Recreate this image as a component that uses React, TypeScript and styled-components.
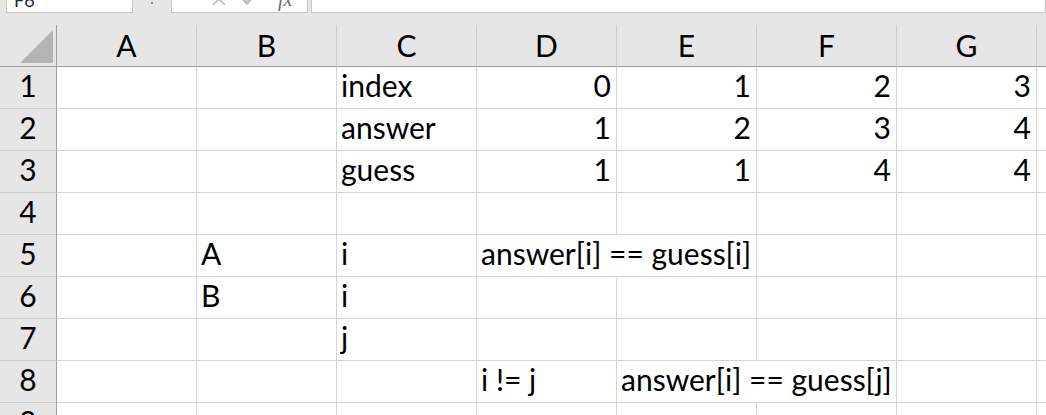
import React from 'react'
import styled, { createGlobalStyle, css } from 'styled-components'

const GlobalStyle = createGlobalStyle`
  html, body {
    margin: 0;
    padding: 0;
    width: 1046px;
    height: 415px;
    overflow: hidden;
    background: #e6e6e6;
  }
`

const Page = styled.div`
  width: 1046px;
  height: 415px;
  overflow: hidden;
  background: #e6e6e6;
  font-family: Lato, 'Open Sans', sans-serif;
`

/* ---------- formula bar (cut off at the top) ---------- */

const Toolbar = styled.div`
  height: 13px;
  display: flex;
  align-items: flex-end;
  overflow: hidden;
  padding-left: 6px;
  margin-bottom: 12px;
`

const boxStyle = css`
  flex: none;
  height: 30px;
  box-sizing: border-box;
  background: #fff;
  border: 1px solid #c6c6c6;
`

const NameBox = styled.div`
  ${boxStyle};
  width: 127px;
  display: flex;
  align-items: flex-end;
  padding: 0 0 3px 7px;
  font-size: 18px;
  line-height: 18px;
  color: #1f2a44;
`

const Grip = styled.div`
  flex: none;
  width: 38px;
  height: 13px;
  display: flex;
  justify-content: center;
  align-items: flex-start;
  padding-top: 2px;
  box-sizing: border-box;

  span {
    width: 2px;
    height: 2px;
    background: #8a8a8a;
  }
`

const IconBox = styled.div`
  ${boxStyle};
  width: 137px;
  display: flex;
  align-items: flex-end;
  padding-bottom: 6px;
`

const IconSlot = styled.div<{ $w: number }>`
  width: ${p => p.$w}px;
  display: flex;
  justify-content: center;
  color: #bdbdbd;
`

const Fx = styled.span`
  font-family: 'Liberation Serif', serif;
  font-style: italic;
  font-size: 20px;
  line-height: 14px;
  color: #6d6d6d;
`

const FormulaInput = styled.div`
  ${boxStyle};
  flex: 1;
  margin-left: 3px;
`

/* ---------- grid ---------- */

const Sheet = styled.div`
  display: grid;
  grid-template-columns: 57px repeat(8, 140px);
  grid-auto-rows: 42px;
`

const cellText = css`
  box-sizing: border-box;
  display: flex;
  align-items: flex-end;
  font-size: 30px;
  line-height: 30px;
  color: #000;
  white-space: nowrap;
`

const Corner = styled.div`
  position: relative;
  box-sizing: border-box;
  border-right: 1px solid #9e9e9e;
  border-bottom: 1px solid #9e9e9e;

  &::after {
    content: '';
    position: absolute;
    right: 3px;
    bottom: 3px;
    width: 0;
    height: 0;
    border-left: 33px solid transparent;
    border-bottom: 33px solid #b4b4b4;
  }
`

const ColHead = styled.div`
  ${cellText};
  justify-content: center;
  padding-bottom: 6px;
  border-right: 1px solid #cdcdcd;
  border-bottom: 1px solid #9e9e9e;
`

const RowHead = styled.div`
  ${cellText};
  justify-content: center;
  padding-bottom: 8px;
  border-right: 1px solid #9e9e9e;
  border-bottom: 1px solid #cdcdcd;
`

const Cell = styled.div<{ $num?: boolean; $spill?: boolean }>`
  ${cellText};
  background: transparent;
  justify-content: ${p => (p.$num ? 'flex-end' : 'flex-start')};
  padding: 0 5px 8px 4px;
  border-right: 1px solid ${p => (p.$spill ? 'transparent' : '#d4d4d4')};
  border-bottom: 1px solid #d4d4d4;
  overflow: visible;
`

const Body = styled.div`
  background: #fff;
  display: contents;
`

const columns = ['A', 'B', 'C', 'D', 'E', 'F', 'G', 'H']

type Value = string | number | undefined

const rows: Value[][] = [
  [, , 'index', 0, 1, 2, 3],
  [, , 'answer', 1, 2, 3, 4],
  [, , 'guess', 1, 1, 4, 4],
  [],
  [, 'A', 'i', 'answer[i] == guess[i]'],
  [, 'B', 'i'],
  [, , 'j'],
  [, , , 'i != j', 'answer[i] == guess[j]'],
  [],
]

// cells whose text runs over into the next column
const spills: Record<string, boolean> = { '5-3': true, '8-4': true }

const CellsBg = styled.div`
  grid-column: 2 / -1;
  grid-row: 2 / 11;
  background: #fff;
`

const XIcon = () => (
  <svg width="14" height="14" viewBox="0 0 14 14">
    <path d="M1 1 L13 13 M13 1 L1 13" stroke="currentColor" strokeWidth="1.6" fill="none" />
  </svg>
)

const CheckIcon = () => (
  <svg width="14" height="14" viewBox="0 0 14 14">
    <path d="M1 7 L5 11 L13 2" stroke="currentColor" strokeWidth="3" fill="none" />
  </svg>
)

export default function App() {
  return (
    <Page>
      <GlobalStyle />
      <Toolbar>
        <NameBox>F6</NameBox>
        <Grip>
          <span />
        </Grip>
        <IconBox>
          <IconSlot $w={30} />
          <IconSlot $w={34}>
            <XIcon />
          </IconSlot>
          <IconSlot $w={28}>
            <CheckIcon />
          </IconSlot>
          <IconSlot $w={44}>
            <Fx>fx</Fx>
          </IconSlot>
        </IconBox>
        <FormulaInput />
      </Toolbar>

      <Sheet>
        <CellsBg />
        <Corner style={{ gridRow: 1, gridColumn: 1 }} />
        {columns.map((c, i) => (
          <ColHead key={c} style={{ gridRow: 1, gridColumn: i + 2 }}>
            {c}
          </ColHead>
        ))}
        <Body>
          {rows.map((row, r) => (
            <React.Fragment key={r}>
              <RowHead style={{ gridRow: r + 2, gridColumn: 1 }}>{r + 1}</RowHead>
              {columns.map((c, ci) => {
                const v = row[ci]
                return (
                  <Cell
                    key={c}
                    style={{ gridRow: r + 2, gridColumn: ci + 2 }}
                    $num={typeof v === 'number'}
                    $spill={spills[`${r + 1}-${ci}`]}
                  >
                    {v}
                  </Cell>
                )
              })}
            </React.Fragment>
          ))}
        </Body>
      </Sheet>
    </Page>
  )
}
